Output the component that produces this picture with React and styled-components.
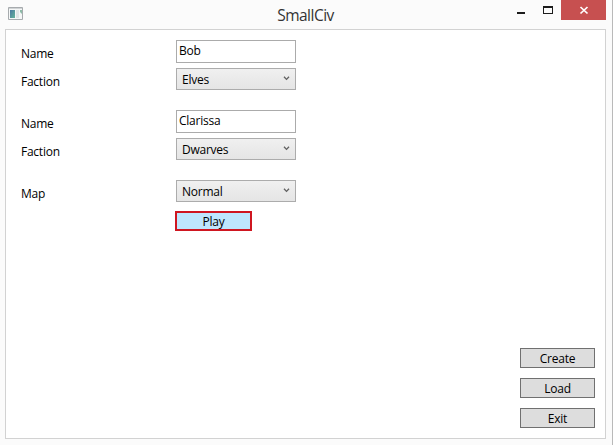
import React from 'react';
import styled, { createGlobalStyle } from 'styled-components';

const GlobalStyle = createGlobalStyle`
  * { box-sizing: border-box; }
  body { margin: 0; background: #fbfbfb; }
  button, input { font: inherit; letter-spacing: inherit; }
`;

const Window = styled.div`
  width: 613px;
  height: 445px;
  display: flex;
  flex-direction: column;
  padding: 0 6px 6px 5px;
  background: #fbfbfb;
  border-right: 1px solid #b9b9b9;
  color: #000;
  font: 12px/16px 'Open Sans', 'Noto Sans', sans-serif;
  letter-spacing: -0.25px;
  overflow: hidden;
`;

const TitleBar = styled.header`
  height: 29px;
  flex: none;
  display: grid;
  grid-template-columns: 105px 1fr 105px;
`;

const AppIcon = styled.svg`
  width: 16px;
  height: 14px;
  margin: 7px 0 0 3px;
`;

const Title = styled.h1`
  margin: 5px 0 0;
  font-size: 15.5px;
  line-height: 21px;
  font-weight: 400;
  letter-spacing: -0.5px;
  color: #333;
  text-align: center;
`;

const Controls = styled.div`
  display: flex;
  justify-content: flex-end;
`;

const ControlButton = styled.button`
  width: ${(p) => (p.$close ? 45 : 27)}px;
  height: 20px;
  padding: 0;
  border: 0;
  background: ${(p) => (p.$close ? '#c75050' : 'transparent')};
  svg { display: block; }
`;

const Panel = styled.main`
  flex: 1;
  display: flex;
  justify-content: space-between;
  width: 601px;
  padding: 10px 10px 10px 15px;
  border: 1px solid #d2d2d2;
  background: #fff;
`;

const Form = styled.form`
  display: flex;
  flex-direction: column;
  gap: 20px;
`;

const Group = styled.div`
  display: grid;
  gap: 5px;
`;

const Row = styled.label`
  display: grid;
  grid-template-columns: 155px 120px;
`;

const Label = styled.span`
  height: 16px;
  margin-top: 6px;
`;

const TextInput = styled.input`
  height: 23px;
  padding: 0 2px 3px;
  border: 1px solid #ababab;
  outline: 0;
  background: #fff;
  color: #000;
`;

const Select = styled.div`
  display: flex;
  justify-content: space-between;
  height: 22px;
  padding: 3px 5px 0;
  border: 1px solid #acacac;
  background: linear-gradient(#f0f0f0, #e5e5e5);
  svg { margin: 4px 0 0; }
`;

const Button = styled.button`
  width: 75px;
  height: 20px;
  padding: 2px 0 0;
  border: 1px solid #707070;
  background: #ddd;
  color: #000;
  line-height: 16px;
`;

const PlayButton = styled(Button)`
  width: 77px;
  margin: -11px 0 0 154px;
  padding: 1px 0 0;
  line-height: 15px;
  border: 2px solid #cf1620;
  background: #bee6fd;
`;

const Actions = styled.nav`
  display: flex;
  flex-direction: column;
  justify-content: flex-end;
  gap: 10px;
`;

function Dropdown({ value }) {
  return (
    <Select role="combobox">
      <span>{value}</span>
      <svg width="7" height="5" viewBox="0 0 7 5">
        <path d="M1 .7 3.5 3.4 6 .7" fill="none" stroke="#606060" strokeWidth="1.3" />
      </svg>
    </Select>
  );
}

function Player({ name, faction }) {
  return (
    <Group>
      <Row><Label>Name</Label><TextInput defaultValue={name} /></Row>
      <Row><Label>Faction</Label><Dropdown value={faction} /></Row>
    </Group>
  );
}

export default function App() {
  return (
    <>
      <GlobalStyle />
      <Window>
        <TitleBar>
          <AppIcon viewBox="0 0 16 14">
            <defs>
              <linearGradient id="pane" x2="1" y2="1">
                <stop stopColor="#4a78a0" />
                <stop offset="1" stopColor="#66b59a" />
              </linearGradient>
            </defs>
            <path d="M.5.5h14v12H.5z" fill="#f5f7f7" stroke="#a7abae" />
            <path d="M1 1h13v1H1z" fill="#d0d3d5" />
            <path d="M2 3h5v8H2z" fill="url(#pane)" />
            <path d="M8 3h3v8H8z" fill="#e1e5e6" />
            <path d="M12 3h2v4l-2-2z" fill="#8dbba8" />
          </AppIcon>
          <Title>SmallCiv</Title>
          <Controls>
            <ControlButton aria-label="Minimize">
              <svg width="27" height="20"><path d="M10 12h8v2h-8z" fill="#1c1c1c" /></svg>
            </ControlButton>
            <ControlButton aria-label="Maximize">
              <svg width="27" height="20">
                <path d="M9 6h10v8H9zM10 8v5h8V8z" fill="#1c1c1c" fillRule="evenodd" />
              </svg>
            </ControlButton>
            <ControlButton $close aria-label="Close">
              <svg width="45" height="20">
                <path d="M19.5 7 26.5 13.5M26.5 7 19.5 13.5" stroke="#fff" strokeWidth="1.7" />
              </svg>
            </ControlButton>
          </Controls>
        </TitleBar>
        <Panel>
          <Form>
            <Player name="Bob" faction="Elves" />
            <Player name="Clarissa" faction="Dwarves" />
            <Row><Label>Map</Label><Dropdown value="Normal" /></Row>
            <PlayButton type="button">Play</PlayButton>
          </Form>
          <Actions>
            <Button>Create</Button>
            <Button>Load</Button>
            <Button>Exit</Button>
          </Actions>
        </Panel>
      </Window>
    </>
  );
}
